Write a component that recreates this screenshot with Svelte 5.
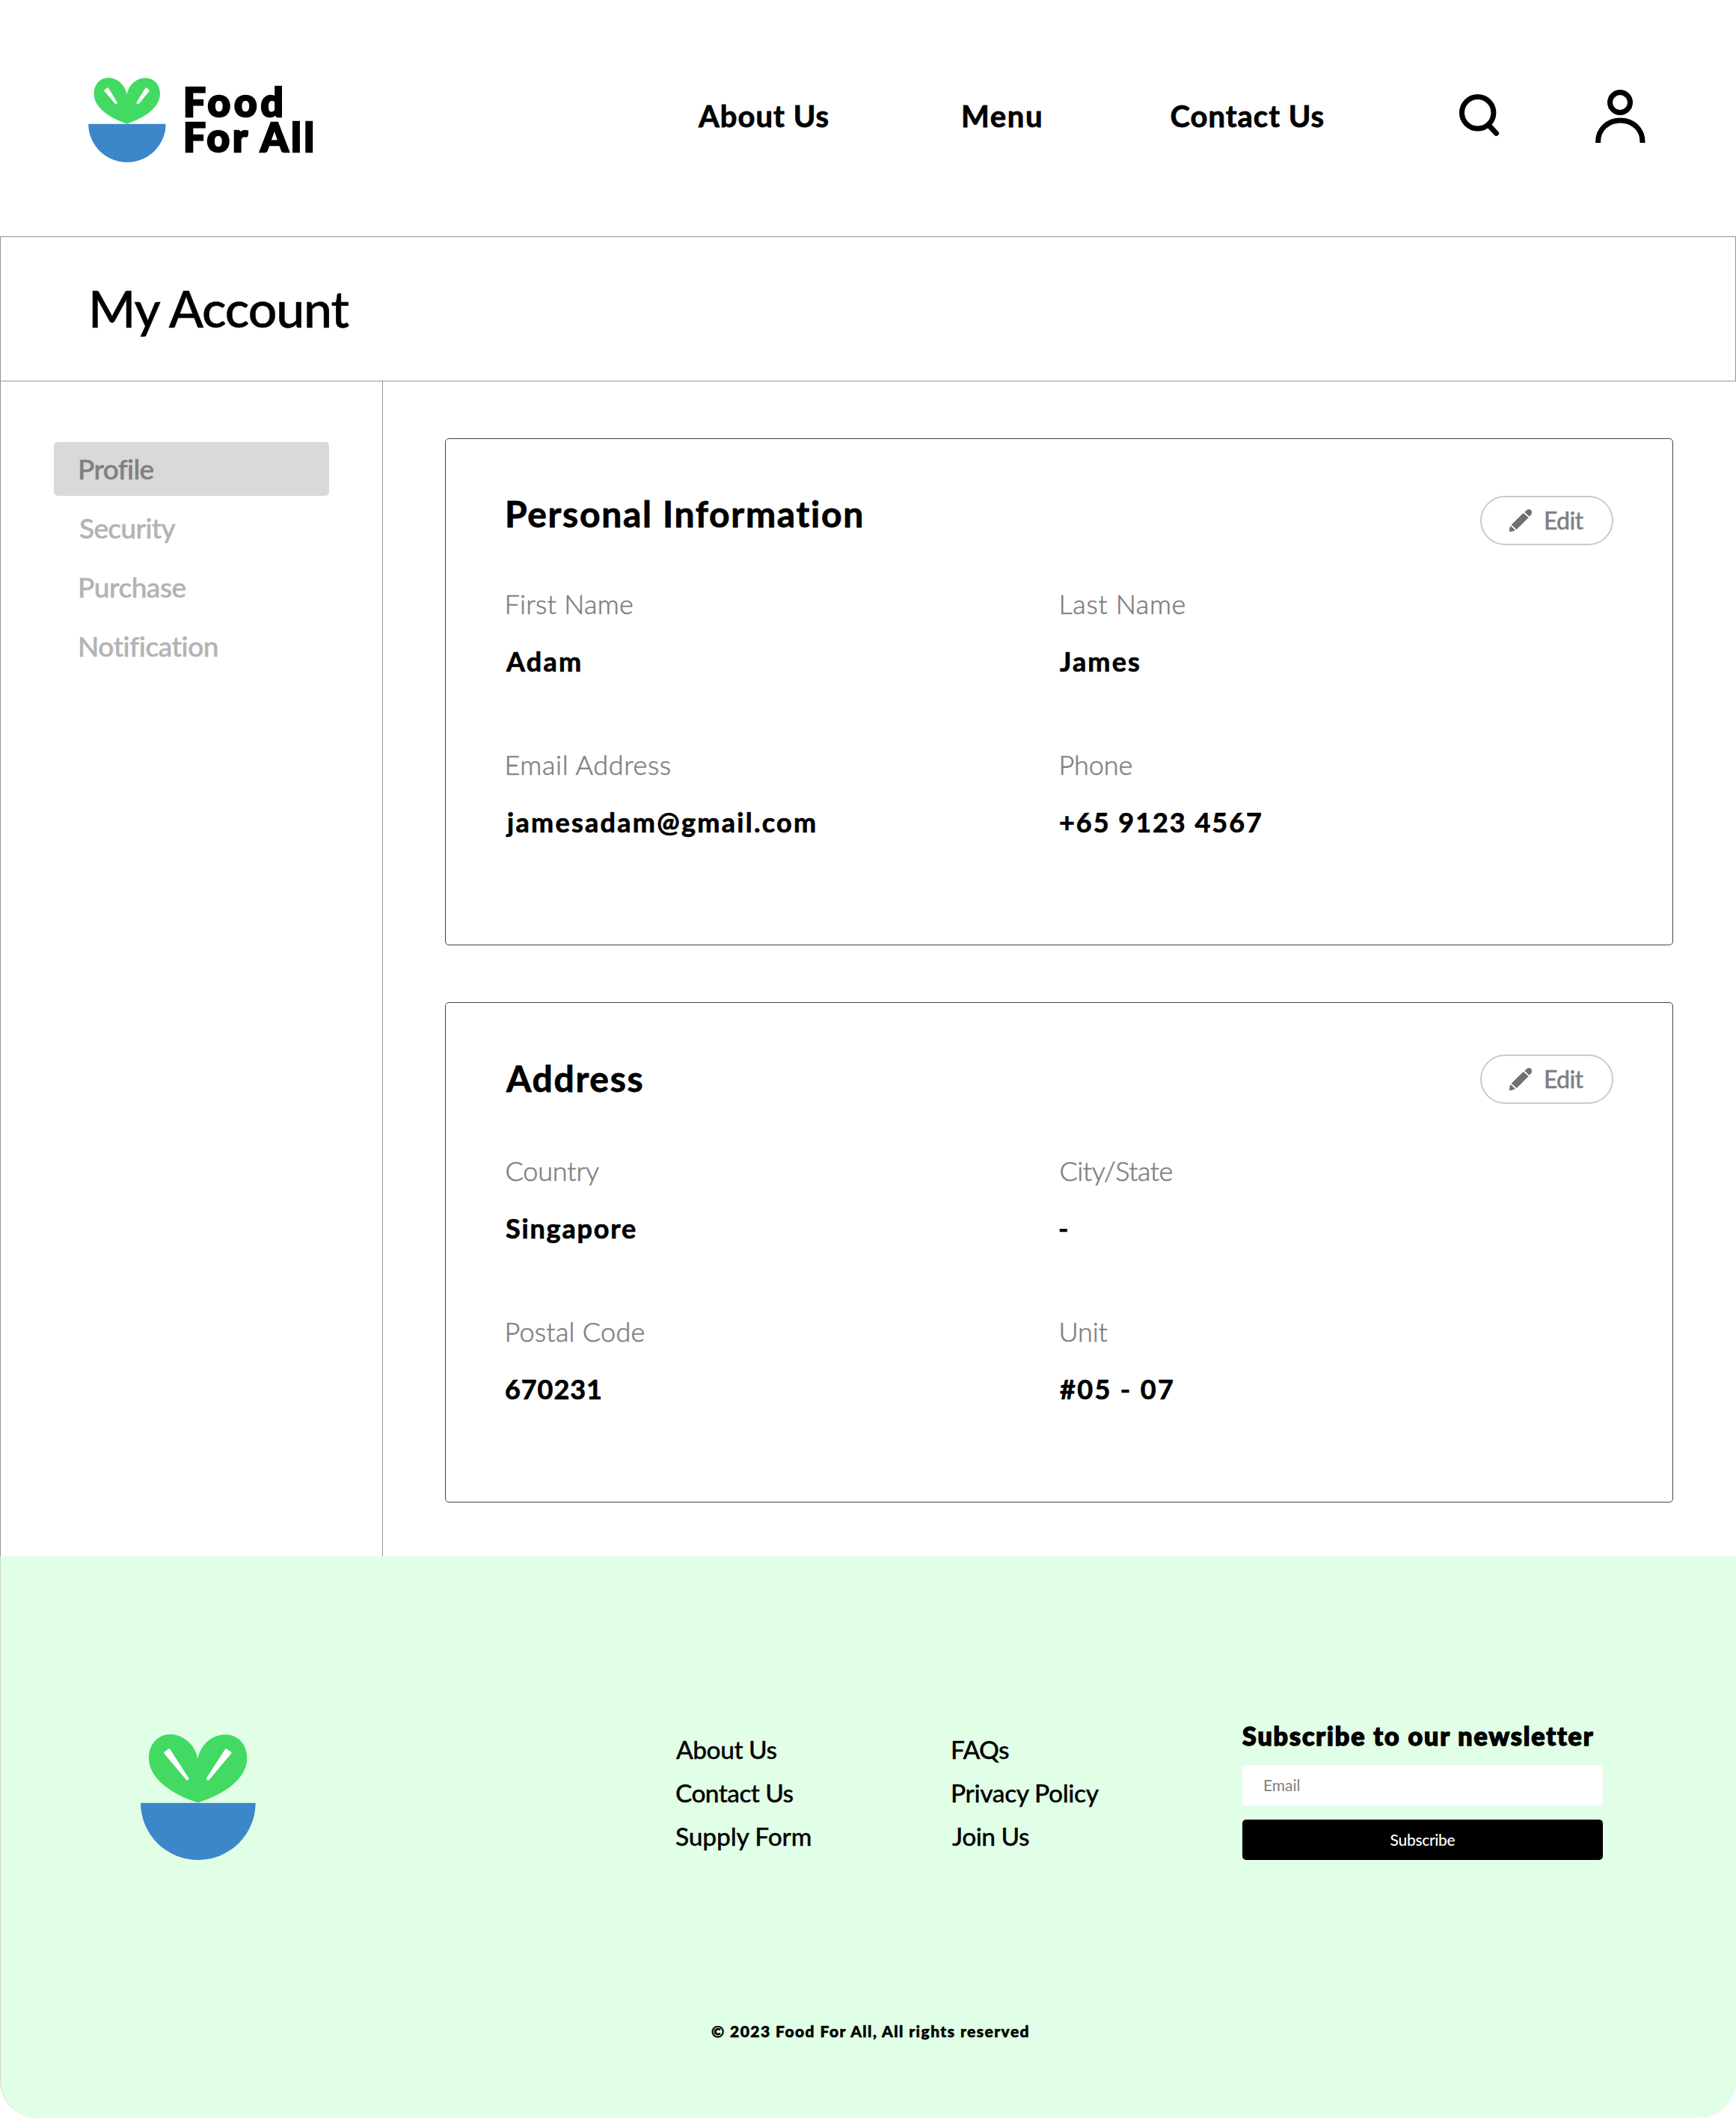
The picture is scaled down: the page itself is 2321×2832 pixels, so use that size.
<script>
  const nav = [
    { label: 'About Us', width: 174.5 },
    { label: 'Menu', width: 104 },
    { label: 'Contact Us', width: 204 }
  ];

  const sections = [
    { label: 'Profile', width: 98, active: true },
    { label: 'Security', width: 127.5 },
    { label: 'Purchase', width: 141.5 },
    { label: 'Notification', width: 184.5 }
  ];

  const cards = [
    {
      id: 'personal',
      title: 'Personal Information',
      width: 475,
      fields: [
        { label: 'First Name', lw: 168.5, value: 'Adam', vw: 100 },
        { label: 'Last Name', lw: 166, value: 'James', vw: 106 },
        { label: 'Email Address', lw: 219.5, value: 'jamesadam@gmail.com', vw: 414 },
        { label: 'Phone', lw: 95, value: '+65 9123 4567', vw: 269 }
      ]
    },
    {
      id: 'address',
      title: 'Address',
      width: 182.5,
      fields: [
        { label: 'Country', lw: 123.5, value: 'Singapore', vw: 174 },
        { label: 'City/State', lw: 149, value: '-', vw: 10 },
        { label: 'Postal Code', lw: 184, value: '670231', vw: 127 },
        { label: 'Unit', lw: 62, value: '#05 - 07', vw: 151 }
      ]
    }
  ];

  const linkGroups = [
    [
      { label: 'About Us', width: 134.5 },
      { label: 'Contact Us', width: 156.5 },
      { label: 'Supply Form', width: 180.5 }
    ],
    [
      { label: 'FAQs', width: 76 },
      { label: 'Privacy Policy', width: 197.5 },
      { label: 'Join Us', width: 103 }
    ]
  ];

  // Tracks a single line of text to a set optical width and aligns its
  // first stroke, rather than its side bearing, with the column edge.
  function track(node, width) {
    const text = node.textContent.trim();
    const style = getComputedStyle(node);
    const ctx = document.createElement('canvas').getContext('2d');
    ctx.font = `${style.fontWeight} ${style.fontSize} ${style.fontFamily}`;
    const m = ctx.measureText(text);
    const ink = m.actualBoundingBoxRight + m.actualBoundingBoxLeft;
    if (text.length > 1) {
      node.style.letterSpacing = `${((width - ink) / (text.length - 1)).toFixed(3)}px`;
    }
    node.style.marginLeft = `${m.actualBoundingBoxLeft.toFixed(2)}px`;
  }
</script>

{#snippet bowl(short)}
  <svg class="bowl" viewBox="114 87 462 504" aria-hidden="true">
    <path fill="#42da62" d="M343 187C335 130 285 87 233 87C183 87 147 127 147 182C147 265 240 327 343 361C450 327 541 265 541 182C541 125 502 88 453 88C400 88 353 130 343 187Z" />
    <path fill="#3c86ca" d="M114 362H575A230.5 229 0 0 1 114 362Z" />
    <g fill="#fff" stroke="#fff" stroke-width="9" stroke-linejoin="round">
      {#if short}
        <path d="M212 163L229 150L282 235L278 240ZM458 150L474 163L411 240L405 235Z" />
      {:else}
        <path d="M212 161L228 149L303 265L301 267ZM457 149L474 161L385 267L382 265Z" />
      {/if}
    </g>
  </svg>
{/snippet}

<div class="page">
  <header>
    {@render bowl(true)}
    <div class="brand">
      <span use:track={127.5}>Food</span>
      <span use:track={171.5}>For All</span>
    </div>
    {#each nav as item}
      <a class="nav" href="#top"><span use:track={item.width}>{item.label}</span></a>
    {/each}
    <svg class="search" viewBox="0 0 54 57" fill="none" stroke="#000" stroke-width="7" stroke-linecap="round" aria-label="Search">
      <circle cx="24.7" cy="24.7" r="21.2" />
      <path d="M39.5 41.5L49.6 52.3" />
    </svg>
    <svg class="user" viewBox="0 0 67 71" fill="none" stroke="#000" stroke-width="7" aria-label="Account">
      <circle cx="33" cy="17" r="13.5" />
      <path d="M3.6 71V69.5C3.6 53 16.5 41 33.4 41S63 53 63 69.5V71" />
    </svg>
  </header>

  <div class="titlebar"><h1 use:track={346.5}>My Account</h1></div>

  <div class="body">
    <aside>
      {#each sections as s}
        <a class="section" class:active={s.active} href="#top"><span use:track={s.width}>{s.label}</span></a>
      {/each}
    </aside>
    <main>
      {#each cards as card}
        <section class="card {card.id}">
          <div class="head">
            <h2><span use:track={card.width}>{card.title}</span></h2>
            <button class="edit">
              <svg viewBox="234 123 90 90" fill="#707070" aria-hidden="true">
                <path d="M295 134L304 126Q314 119 321 127Q327 135 322 143L314 152Z" />
                <path d="M290 138L311 156L263 204L242 185Z" />
                <path d="M239 189L258 207Q247 213 234 213Q233 200 239 189Z" />
              </svg>
              <span use:track={51.5}>Edit</span>
            </button>
          </div>
          <dl>
            {#each card.fields as f}
              <div class="field">
                <dt><span use:track={f.lw}>{f.label}</span></dt>
                <dd><span use:track={f.vw}>{f.value}</span></dd>
              </div>
            {/each}
          </dl>
        </section>
      {/each}
    </main>
  </div>

  <footer>
    <div class="columns">
      {@render bowl(false)}
      {#each linkGroups as group}
        <nav class="links">
          {#each group as l}
            <a href="#top"><span use:track={l.width}>{l.label}</span></a>
          {/each}
        </nav>
      {/each}
      <form class="newsletter">
        <h3 use:track={468}>Subscribe to our newsletter</h3>
        <div class="input"><span use:track={47.5}>Email</span></div>
        <button type="button" class="subscribe"><span use:track={87}>Subscribe</span></button>
      </form>
    </div>
    <p class="copyright"><span use:track={425.5}>© 2023 Food For All, All rights reserved</span></p>
  </footer>
</div>

<style>
  :global(body) { margin: 0; background: #fff; }
  .page, .page :global(*) { box-sizing: border-box; }
  .page {
    width: 2321px;
    height: 2832px;
    display: flex;
    flex-direction: column;
    overflow: hidden;
    background: #fff;
    color: #000;
    font-family: Lato, "Open Sans", sans-serif;
    white-space: nowrap;
  }
  span, h1, h3 { display: inline-block; }
  h1, h2, h3, p, dl, dt, dd { margin: 0; }
  a { color: inherit; text-decoration: none; }
  svg { display: block; }
  button { font-family: inherit; margin: 0; padding: 0; }

  header {
    height: 316px;
    flex: none;
    display: grid;
    grid-template-columns: 131px 684px 355px 277.5px 385.5px 182px 1fr;
    align-items: start;
    padding-left: 118px;
  }
  header .bowl { width: 104px; height: 113px; margin-top: 104px; }
  .brand {
    display: flex;
    flex-direction: column;
    align-items: flex-start;
    margin-top: 112px;
    font-size: 53px;
    line-height: 47px;
    font-weight: 900;
    -webkit-text-stroke: 2.6px currentColor;
  }
  .nav {
    margin-top: 131px;
    font-size: 40px;
    line-height: 48px;
    font-weight: 700;
    -webkit-text-stroke: 0.8px currentColor;
  }
  .search { width: 54px; height: 57px; margin-top: 126px; }
  .user { width: 67px; height: 71px; margin-top: 120px; }

  .titlebar {
    height: 194px;
    flex: none;
    border: 1px solid #939393;
    padding: 54px 0 0 123px;
  }
  h1 { font-size: 68px; line-height: 82px; font-weight: 500; -webkit-text-stroke: 0.5px currentColor; }

  .body { flex: none; height: 1571px; display: flex; border-left: 1px solid #939393; }
  aside {
    width: 511px;
    display: flex;
    flex-direction: column;
    gap: 7px;
    padding: 81px 0 0 71px;
    border-right: 1px solid #939393;
  }
  .section {
    width: 368px;
    height: 72px;
    padding: 0 0 2px 35px;
    border-radius: 5px;
    font-size: 37px;
    line-height: 71px;
    font-weight: 500;
    color: #b3b3b3;
    -webkit-text-stroke: 0.5px currentColor;
  }
  .section.active { background: #d9d9d9; color: #808080; }

  main { display: flex; flex-direction: column; gap: 76px; padding: 76px 0 0 83px; }
  .card { width: 1642px; border: 1px solid #444; border-radius: 5px; padding: 0 79px 0 80px; }
  .personal { height: 678px; }
  .address { height: 669px; }
  .head { display: flex; justify-content: space-between; align-items: flex-start; }
  .personal .head { height: 198px; }
  .address .head { height: 202px; }
  h2 {
    margin-top: 71px;
    padding-left: 2px;
    font-size: 48px;
    line-height: 58px;
    font-weight: 700;
    -webkit-text-stroke: 0.8px currentColor;
  }
  .address h2 { margin-top: 72px; padding-left: 0; }
  .edit {
    display: flex;
    align-items: center;
    gap: 18px;
    width: 178px;
    height: 66px;
    margin-top: 76px;
    padding-left: 37px;
    border: 2px solid #cacaca;
    border-radius: 33px;
    background: #fff;
    color: #808080;
    font-size: 32px;
    line-height: 40px;
    font-weight: 500;
    -webkit-text-stroke: 0.4px currentColor;
  }
  .address .edit { margin-top: 69px; }
  .edit svg { width: 30px; height: 30px; }
  dl { display: grid; grid-template-columns: 741px 1fr; row-gap: 94px; }
  .field { display: flex; flex-direction: column; gap: 33px; font-size: 36px; line-height: 45px; }
  dt, dd { height: 44px; }
  dt { padding-left: 1.5px; color: #808080; font-weight: 300; -webkit-text-stroke: 0.6px currentColor; }
  dd { font-weight: 700; -webkit-text-stroke: 0.7px currentColor; }

  footer {
    height: 751px;
    flex: none;
    border-left: 1px solid #d0d6d1;
    border-radius: 0 0 50px 50px;
    background: #e1ffe7;
  }
  .columns {
    display: grid;
    grid-template-columns: 716px 369px 388px 482px;
    align-items: start;
    height: 622px;
    padding-left: 187px;
  }
  footer .bowl { width: 154px; height: 168px; margin-top: 238px; }
  .links {
    display: flex;
    flex-direction: column;
    margin-top: 228.5px;
    font-size: 33.5px;
    line-height: 58px;
    font-weight: 500;
    -webkit-text-stroke: 0.3px currentColor;
  }
  .newsletter { display: flex; flex-direction: column; align-items: flex-start; padding-top: 219px; }
  h3 { margin-top: 1px; font-size: 34px; line-height: 40px; font-weight: 900; -webkit-text-stroke: 1.5px currentColor; }
  .input, .subscribe {
    width: 482px;
    height: 54px;
    border: 0;
    border-radius: 5px;
    font-size: 21px;
    line-height: 54px;
    font-weight: 500;
  }
  .input { margin-top: 19px; padding-left: 29px; background: #fff; color: #808080; font-weight: 400; }
  .subscribe { margin-top: 19px; background: #000; color: #fff; text-align: center; }
  .copyright {
    padding-left: 6px;
    text-align: center;
    font-size: 21px;
    line-height: 26px;
    font-weight: 900;
    -webkit-text-stroke: 0.6px currentColor;
  }
</style>
